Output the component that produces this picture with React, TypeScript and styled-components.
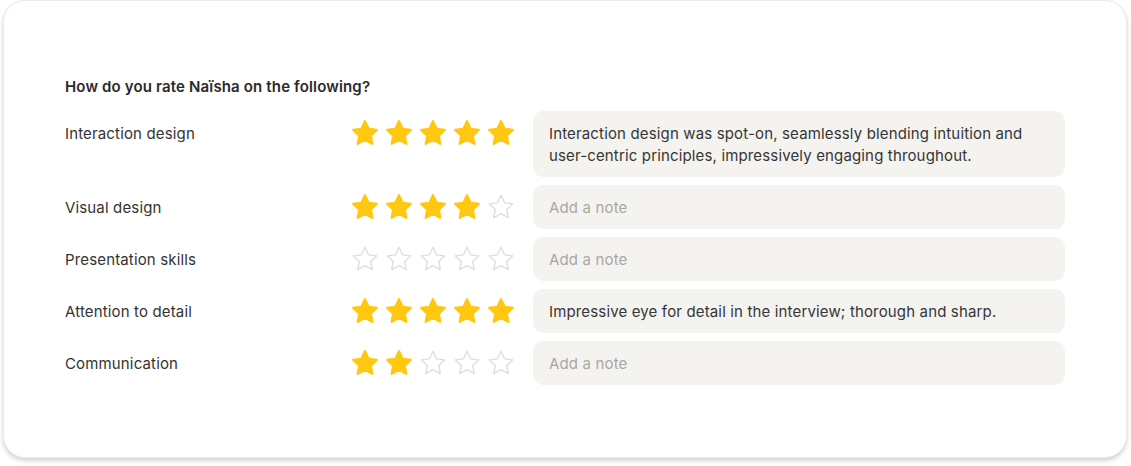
import React from "react";
import styled, { createGlobalStyle } from "styled-components";

const Global = createGlobalStyle`
  html, body { margin: 0; padding: 0; background: #ffffff; }
  body { font-family: Inter, "Noto Sans", Arial, sans-serif; -webkit-font-smoothing: antialiased; }
  * { box-sizing: border-box; }
`;

const Page = styled.div`
  padding: 0 4px 8px 3px;
`;

const Card = styled.section`
  background: #ffffff;
  border-radius: 22px;
  border: 1px solid #ececec;
  box-shadow: 0 3px 4px rgba(0, 0, 0, 0.16), 0 0 2px rgba(0, 0, 0, 0.06);
  padding: 75px 61px 72px 61px;
  height: 458px;
`;

const Heading = styled.h2`
  margin: 0 0 13px;
  font-size: 15px;
  line-height: 22px;
  font-weight: 600;
  letter-spacing: 0.15px;
  color: #2a2a2a;
`;

const Rows = styled.div`
  display: flex;
  flex-direction: column;
  gap: 8px;
`;

const Row = styled.div`
  display: grid;
  grid-template-columns: 285px 183px 1fr;
  align-items: start;
`;

const Label = styled.div`
  padding-top: 12px;
  font-size: 15px;
  line-height: 22px;
  letter-spacing: 0.15px;
  color: #333333;
`;

const Stars = styled.div`
  display: flex;
  gap: 4px;
  padding-top: 7px;
`;

const Note = styled.div<{ $empty: boolean }>`
  background: #f4f3f0;
  border-radius: 10px;
  padding: 12px 16px 10px;
  font-size: 15px;
  line-height: 22px;
  letter-spacing: 0.15px;
  color: ${(p) => (p.$empty ? "#a9a7a4" : "#363636")};
`;

const StarSvg = styled.svg`
  width: 30px;
  height: 30px;
  display: block;
`;

const Star: React.FC<{ filled: boolean }> = ({ filled }) => (
  <StarSvg viewBox="0 0 24 24">
    <path
      d="M12 2.6l2.85 6.05 6.55.85-4.8 4.55 1.25 6.55L12 17.35 6.15 20.6l1.25-6.55-4.8-4.55 6.55-.85z"
      fill={filled ? "#FFC70F" : "#ffffff"}
      stroke={filled ? "#FFC70F" : "#dddddd"}
      strokeWidth={filled ? 1.8 : 1.1}
      strokeLinejoin="round"
    />
  </StarSvg>
);

const data = [
  {
    label: "Interaction design",
    rating: 5,
    note: "Interaction design was spot-on, seamlessly blending intuition and user-centric principles, impressively engaging throughout.",
  },
  { label: "Visual design", rating: 4, note: "" },
  { label: "Presentation skills", rating: 0, note: "" },
  {
    label: "Attention to detail",
    rating: 5,
    note: "Impressive eye for detail in the interview; thorough and sharp.",
  },
  { label: "Communication", rating: 2, note: "" },
];

export default function App() {
  return (
    <Page>
      <Global />
      <Card>
        <Heading>How do you rate Naïsha on the following?</Heading>
        <Rows>
          {data.map((d) => (
            <Row key={d.label}>
              <Label>{d.label}</Label>
              <Stars>
                {[1, 2, 3, 4, 5].map((i) => (
                  <Star key={i} filled={i <= d.rating} />
                ))}
              </Stars>
              <Note $empty={!d.note}>{d.note || "Add a note"}</Note>
            </Row>
          ))}
        </Rows>
      </Card>
    </Page>
  );
}
